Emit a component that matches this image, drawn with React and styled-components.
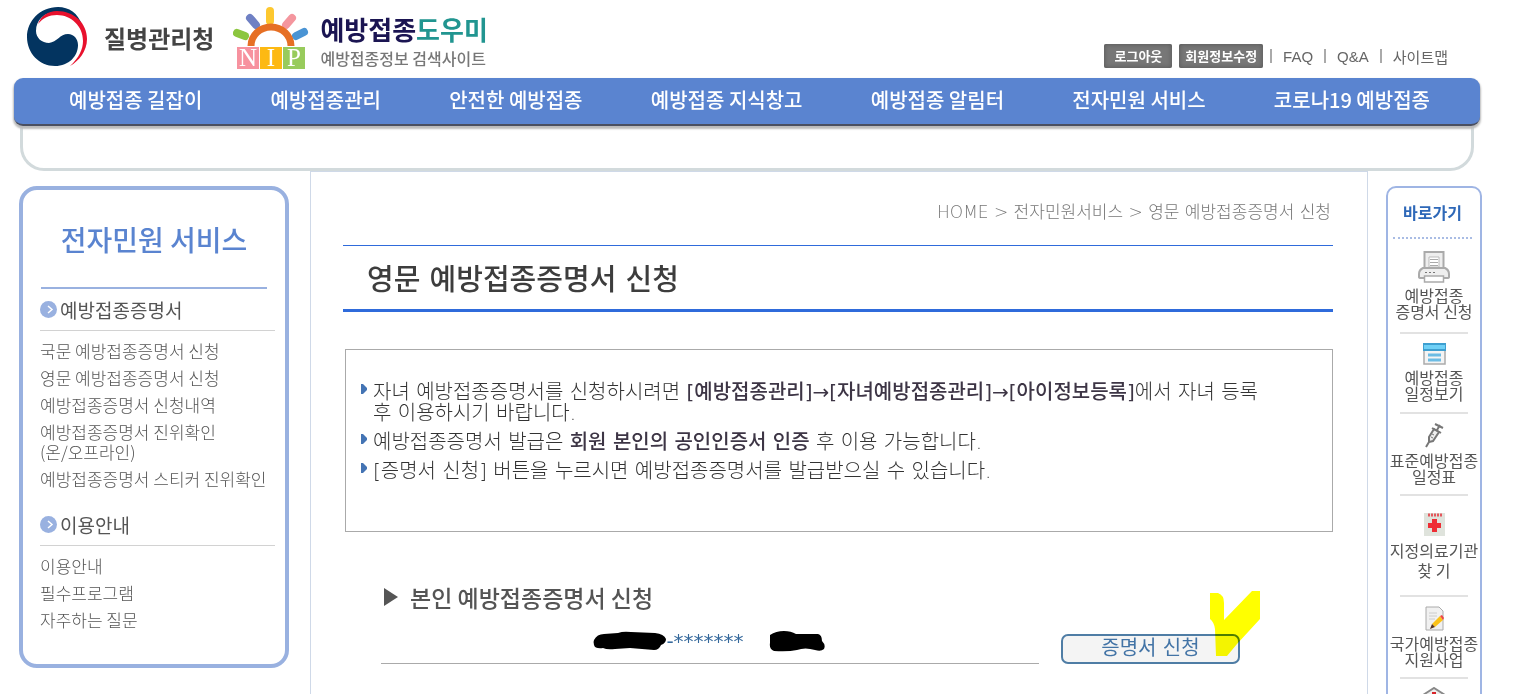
import React from 'react';
import styled, { createGlobalStyle } from 'styled-components';

const GlobalStyle = createGlobalStyle`
  * {
    box-sizing: border-box;
  }
  body {
    margin: 0;
    background: #fff;
    color: #555;
    font-family: 'Noto Sans CJK KR', sans-serif;
    font-weight: 300;
  }
  a {
    color: inherit;
    text-decoration: none;
  }
  ul, h1, h2, h3, p {
    margin: 0;
    padding: 0;
    font-weight: inherit;
  }
  ul {
    list-style: none;
  }
  svg {
    display: block;
  }
`;

const Header = styled.header`
  display: flex;
  justify-content: space-between;
  height: 78px;
  padding: 6px 71px 0 26px;
`;

const Logos = styled.div`
  display: flex;
  align-items: flex-start;
`;

const Agency = styled.a`
  display: flex;
  align-items: center;
  gap: 16px;
  height: 62px;
  margin-right: 19px;
  color: #444;
  font-size: 24px;
  font-weight: 700;
`;

const SiteName = styled.a`
  display: flex;
  gap: 11px;
`;

const SiteTitle = styled.span`
  display: block;
  margin-top: 4px;
  color: #1b1552;
  font-size: 26px;
  line-height: 38px;
  font-weight: 700;
  em {
    color: #219590;
    font-style: normal;
  }
`;

const SiteSub = styled.span`
  display: block;
  color: #777;
  font-size: 16px;
  line-height: 20px;
  font-weight: 500;
`;

const Util = styled.div`
  display: flex;
  align-items: center;
  align-self: flex-end;
  height: 24px;
  margin-bottom: 10px;
  color: #666;
  font-family: 'Liberation Sans', 'Noto Sans CJK KR', sans-serif;
  font-size: 15px;
  font-weight: 400;
`;

const UtilButton = styled.button`
  height: 24px;
  margin-right: 7px;
  padding: 0 ${(props) => props.$pad}px;
  border: 0;
  border-radius: 2px;
  background: #777;
  box-shadow: inset 0 0 5px #555;
  color: #fff;
  font: 700 13px/22px 'Noto Sans CJK KR', sans-serif;
`;

const Bar = styled.span`
  width: 2px;
  height: 14px;
  margin: 0 11px 0 ${(props) => props.$left || 0}px;
  background: #aaa;
`;

const NavArea = styled.div`
  padding: 0 39px 0 14px;
`;

const Nav = styled.nav`
  position: relative;
  height: 48px;
  padding: 0 50px 0 55px;
  border-bottom: 2px solid #4a4f60;
  border-radius: 9px;
  background: #5a84d0;
  box-shadow: 0 2px 2px 1px #bbb;
  ul {
    display: flex;
    justify-content: space-between;
  }
  a {
    color: #fff;
    font-size: 20px;
    line-height: 44px;
    font-weight: 500;
    white-space: nowrap;
  }
`;

const SubNav = styled.div`
  height: 45px;
  margin: 0 6px;
  border: 3px solid #d2dadc;
  border-top: 0;
  border-radius: 0 0 24px 24px;
`;

const Body = styled.div`
  display: grid;
  grid-template-columns: 310px 1fr 151px;
  align-items: start;
`;

const Side = styled.aside`
  min-height: 482px;
  margin: 15px 21px 0 19px;
  padding: 29px 10px 0 17px;
  border: 4px solid #99b1e0;
  border-radius: 18px;
`;

const SideTitle = styled.h2`
  margin: 0 8px 0 1px;
  padding-bottom: 27px;
  border-bottom: 2px solid #99b1e0;
  color: #5a84d0;
  font-size: 28px;
  line-height: 41px;
  font-weight: 500;
  text-align: center;
`;

const SideHead = styled.h3`
  display: flex;
  align-items: center;
  gap: 3px;
  height: 42px;
  margin-bottom: 7px;
  border-bottom: 1px solid #d2d2d2;
  color: #555;
  font-size: 19px;
  font-weight: 400;
`;

const SideList = styled.ul`
  margin-bottom: 11px;
  font-size: 17px;
  line-height: 20px;
  white-space: nowrap;
  li {
    padding: 3px 0 4px;
  }
`;

const Main = styled.main`
  min-height: 620px;
  padding: 27px 34px 0 32px;
  border: 1px solid #cfd9e8;
  border-width: 1px 1px 0;
`;

const Crumbs = styled.div`
  padding-right: 2px;
  color: #777;
  font-family: 'DejaVu Sans', 'Noto Sans CJK KR', sans-serif;
  font-size: 17px;
  line-height: 26px;
  text-align: right;
`;

const PageTitle = styled.h1`
  margin-top: 20px;
  padding: 5px 0 0 24px;
  border-top: 1px solid #2f6bdb;
  border-bottom: 3px solid #2f6bdb;
  color: #3d3d3d;
  font-family: 'DejaVu Sans', 'Noto Sans CJK KR', sans-serif;
  font-size: 29px;
  line-height: 58px;
  font-weight: 500;
`;

const Notice = styled.ul`
  min-height: 183px;
  margin: 37px 0 0 2px;
  padding: 32px 20px 0 15px;
  border: 1px solid #aaa;
  color: #333;
  font-family: 'DejaVu Sans', 'Noto Sans CJK KR', sans-serif;
  font-size: 20px;
  line-height: 21px;
  li {
    display: flex;
    gap: 6px;
    margin-bottom: 8px;
  }
  svg {
    flex: none;
    margin-top: 2px;
  }
  b {
    color: #3d3545;
    font-weight: 500;
  }
`;

const Apply = styled.section`
  padding: 49px 93px 0 38px;
`;

const ApplyTitle = styled.h2`
  display: flex;
  align-items: center;
  gap: 12px;
  padding-left: 3px;
  color: #555;
  font-size: 23px;
  line-height: 32px;
  font-weight: 500;
`;

const ApplyRow = styled.div`
  display: flex;
  align-items: flex-end;
  gap: 22px;
  margin-top: 17px;
`;

const Person = styled.div`
  display: flex;
  flex: 1;
  align-items: center;
  justify-content: center;
  height: 34px;
  padding: 0 2px 11px 0;
  border-bottom: 1px solid #aaa;
  color: #36699c;
  font-family: 'DejaVu Sans', sans-serif;
  font-size: 20px;
  font-weight: 400;
`;

const Masked = styled.span`
  margin-right: 25px;
`;

const ButtonWrap = styled.div`
  position: relative;
`;

const ApplyButton = styled.button`
  display: block;
  width: 179px;
  height: 30px;
  padding: 0 0 2px;
  border: 2px solid #4f7da5;
  border-radius: 7px;
  background: #f4f4f4;
  color: #4374a6;
  font: 400 20px/24px 'DejaVu Sans', 'Noto Sans CJK KR', sans-serif;
`;

const Mark = styled.svg`
  position: absolute;
  top: -43px;
  right: -20px;
  mix-blend-mode: multiply;
  pointer-events: none;
`;

const Quick = styled.aside`
  margin: 15px 37px 0 18px;
  padding-top: 7px;
  border: 2px solid #9fb5e4;
  border-radius: 10px 10px 0 0;
  text-align: center;
`;

const QuickTitle = styled.h2`
  margin: 0 8px 0 5px;
  padding-bottom: 8px;
  border-bottom: 2px dotted #a9bce4;
  color: #2e68b8;
  font-size: 16px;
  line-height: 34px;
  font-weight: 700;
`;

const QuickItem = styled.li`
  display: flex;
  flex-direction: column;
  align-items: center;
  padding-top: ${(props) => props.$top}px;
  color: #555;
  font-size: 16px;
  line-height: ${(props) => props.$line || 16}px;
  font-weight: 400;
  white-space: nowrap;
  &::after {
    content: '';
    width: 68px;
    height: 2px;
    margin-top: ${(props) => props.$bottom}px;
    background: #e2e2e2;
  }
  svg {
    margin-bottom: 4px;
  }
`;

const TaegukLogo = () => (
  <svg width="62" height="62" viewBox="0 0 62 60">
    <path d="M32 0C14 0 1 14 1 30s12 29 28 29c14 0 23-10 23-21 0-6-4-11-10-11-8 0-11 8-19 9-7 0-13-5-13-12C10 13 18 5 31 5c10 0 19 4 25 13C52 6 43 0 32 0z" fill="#033460" />
    <path d="M12 17C15 9 22 4 31 4c17 0 30 12 30 28 0 12-8 22-17 27 9-8 13-17 13-25C57 19 45 8 31 8c-8 0-14 3-19 9z" fill="#e8112d" />
  </svg>
);

const NipLogo = () => (
  <svg width="76" height="63" viewBox="0 0 76 63">
    <g strokeWidth="8" strokeLinecap="round">
      <path d="M17 12l6 7" stroke="#6f80c4" />
      <path d="M37 5v10" stroke="#fdc82f" />
      <path d="M59 12l-6 7" stroke="#f4969e" />
      <path d="M4 27l8 3" stroke="#8cc63f" />
      <path d="M71 26l-8 4" stroke="#4a94d4" />
    </g>
    <path d="M18 40a20 19 0 0 1 40 0" fill="none" stroke="#e66f24" strokeWidth="7" />
    <path d="M4 41h22v22H4z" fill="#f7929f" />
    <path d="M27 41h22v22H27z" fill="#fdb913" />
    <path d="M50 41h22v22H50z" fill="#98cb5c" />
    <g fill="#fff" fontFamily="Liberation Serif, serif" fontWeight="400" fontSize="25" textAnchor="middle">
      <text x="15" y="60">N</text>
      <text x="38" y="60">I</text>
      <text x="61" y="60">P</text>
    </g>
  </svg>
);

const CircleArrow = () => (
  <svg width="17" height="17" viewBox="0 0 17 17">
    <circle cx="8.5" cy="8.5" r="8.5" fill="#99b1e0" />
    <path d="M8 5l4 3.500-4 3.500" fill="none" stroke="#fff" strokeWidth="1.500" />
  </svg>
);

const Bullet = () => (
  <svg width="6" height="10" viewBox="0 0 6 10">
    <path d="M0 0h2l4 4v2L2 10H0z" fill="#4474b4" />
  </svg>
);

const PrinterIcon = () => (
  <svg width="32" height="32" viewBox="0 0 32 32" fill="#eee" stroke="#aaa">
    <path d="M6.500 1h19v18h-19z" strokeWidth="2" />
    <path d="M11 6h10v10H11z" fill="#fff" stroke="#bbb" />
    <path d="M12 8.500h8M12 11.500h8M12 14.500h8" />
    <path d="M5 17h22q4 2 4 6v3q0 1-2 1H3q-2 0-2-1v-3q0-4 4-6z" strokeWidth="2" />
    <path d="M7 21.500h2M11 21.500h2M15 21.500h2" stroke="#777" />
    <path d="M6.500 25h19v6h-19z" fill="#fff" strokeWidth="1.500" />
  </svg>
);

const ScheduleIcon = () => (
  <svg width="23" height="22" viewBox="0 0 23 22">
    <path d="M1 1h21v20H1z" fill="#f4f4f4" stroke="#aaa" strokeWidth="1.500" />
    <path d="M0 0h23v8H0z" fill="#3e9fd0" />
    <path d="M1 2h21v4H1z" fill="#6fd0f6" />
    <path d="M5 12h13M5 17h13" stroke="#6cbce4" strokeWidth="3" />
  </svg>
);

const SyringeIcon = () => (
  <svg width="20" height="25" viewBox="0 0 20 25" fill="none" stroke="#777">
    <path d="M10 6L5 14v5l4-1 6-9z" fill="#eee" strokeWidth="2" />
    <path d="M5 19l-3 5M8 5l9 5M13 7l3-5M11 1l8 4" strokeWidth="2" />
    <path d="M8 11l2 1M7 14l2 1" />
  </svg>
);

const HospitalIcon = () => (
  <svg width="21" height="23" viewBox="0 0 21 23">
    <path d="M0 0h21v23H0z" fill="#dfe3dc" />
    <path d="M4 2h15" stroke="#e4575c" strokeWidth="3" strokeDasharray="2 1" />
    <path d="M8 6h5v4h4v5h-4v4H8v-4H4v-5h4z" fill="#ee2d35" />
  </svg>
);

const NoteIcon = () => (
  <svg width="19" height="25" viewBox="0 0 19 25">
    <path d="M1 1h13l4 4v19H1z" fill="#f1f1f1" stroke="#aaa" />
    <path d="M4 7h8M4 10h8M4 13h6" stroke="#ccc" />
    <path d="M7 18L15 10l3 4-8 7z" fill="#fbc218" />
    <path d="M15 10l2-1 2 3-1 2z" fill="#e44" />
    <path d="M7 18l3 3-5 2z" fill="#553322" />
  </svg>
);

const ClinicIcon = () => (
  <svg width="26" height="24" viewBox="0 0 26 24">
    <path d="M2 8L13 1l11 7v15H2z" fill="#eee" stroke="#888" strokeWidth="2" />
    <path d="M11 5h4v4h4v4h-4v4h-4v-4H7V9h4z" fill="#d8232a" />
  </svg>
);

const menus = [
  '예방접종 길잡이',
  '예방접종관리',
  '안전한 예방접종',
  '예방접종 지식창고',
  '예방접종 알림터',
  '전자민원 서비스',
  '코로나19 예방접종',
];

const sideMenus = [
  {
    title: '예방접종증명서',
    items: [
      ['국문 예방접종증명서 신청'],
      ['영문 예방접종증명서 신청'],
      ['예방접종증명서 신청내역'],
      ['예방접종증명서 진위확인', '(온/오프라인)'],
      ['예방접종증명서 스티커 진위확인'],
    ],
  },
  {
    title: '이용안내',
    items: [['이용안내'], ['필수프로그램'], ['자주하는 질문']],
  },
];

const quickMenus = [
  { icon: <PrinterIcon />, lines: ['예방접종', '증명서 신청'], top: 12, bottom: 13 },
  { icon: <ScheduleIcon />, lines: ['예방접종', '일정보기'], top: 9, bottom: 11 },
  { icon: <SyringeIcon />, lines: ['표준예방접종', '일정표'], top: 9, bottom: 10 },
  { icon: <HospitalIcon />, lines: ['지정의료기관', '찾 기'], top: 17, bottom: 15, line: 20 },
  { icon: <NoteIcon />, lines: ['국가예방접종', '지원사업'], top: 9, bottom: 10 },
  { icon: <ClinicIcon />, lines: ['지정의료기관', '로그인'], top: 8, bottom: 8 },
];

function App() {
  return (
    <>
      <GlobalStyle />
      <Header>
        <Logos>
          <Agency href="#">
            <TaegukLogo />
            질병관리청
          </Agency>
          <SiteName href="#">
            <NipLogo />
            <span>
              <SiteTitle>예방접종<em>도우미</em></SiteTitle>
              <SiteSub>예방접종정보 검색사이트</SiteSub>
            </span>
          </SiteName>
        </Logos>
        <Util>
          <UtilButton $pad={10}>로그아웃</UtilButton>
          <UtilButton $pad={6}>회원정보수정</UtilButton>
          <Bar />
          <a href="#">FAQ</a>
          <Bar $left={11} />
          <a href="#">Q&amp;A</a>
          <Bar $left={11} />
          <a href="#">사이트맵</a>
        </Util>
      </Header>
      <NavArea>
        <Nav>
          <ul>
            {menus.map((menu) => <li key={menu}><a href="#">{menu}</a></li>)}
          </ul>
        </Nav>
        <SubNav />
      </NavArea>
      <Body>
        <Side>
          <SideTitle>전자민원 서비스</SideTitle>
          {sideMenus.map((group) => (
            <div key={group.title}>
              <SideHead><CircleArrow />{group.title}</SideHead>
              <SideList>
                {group.items.map((item) => (
                  <li key={item[0]}>
                    <a href="#">{item[0]}{item[1] && <><br />{item[1]}</>}</a>
                  </li>
                ))}
              </SideList>
            </div>
          ))}
        </Side>
        <Main>
          <Crumbs>HOME &gt; 전자민원서비스 &gt; 영문 예방접종증명서 신청</Crumbs>
          <PageTitle>영문 예방접종증명서 신청</PageTitle>
          <Notice>
            <li>
              <Bullet />
              <p>
                자녀 예방접종증명서를 신청하시려면 <b>[예방접종관리]→[자녀예방접종관리]→[아이정보등록]</b>에서 자녀 등록<br />
                후 이용하시기 바랍니다.
              </p>
            </li>
            <li>
              <Bullet />
              <p>예방접종증명서 발급은 <b>회원 본인의 공인인증서 인증</b> 후 이용 가능합니다.</p>
            </li>
            <li>
              <Bullet />
              <p>[증명서 신청] 버튼을 누르시면 예방접종증명서를 발급받으실 수 있습니다.</p>
            </li>
          </Notice>
          <Apply>
            <ApplyTitle>
              <svg width="14" height="18" viewBox="0 0 14 18"><path d="M0 0l14 9-14 9z" fill="#555" /></svg>
              본인 예방접종증명서 신청
            </ApplyTitle>
            <ApplyRow>
              <Person>
                <svg width="73" height="20" viewBox="0 0 73 20">
                  <path d="M1 9Q4 3 11 3l14-1Q30 0 38 1l24 1q9 1 11 6 0 4-5 6-2 5-7 5L37 17l-15 1q-8 1-12-1-8 1-9-3-1-3 0-5z" />
                </svg>
                <Masked>-*******</Masked>
                <svg width="56" height="21" viewBox="0 0 56 21">
                  <path d="M1 4Q7 0 15 0q7 0 12 3h22q4 1 4 7 4 4 2 8-3 3-9 1-10-3-18 0-9 2-23 1-5-2-4-8z" />
                </svg>
              </Person>
              <ButtonWrap>
                <ApplyButton>증명서 신청</ApplyButton>
                <Mark width="50" height="65" viewBox="0 0 50 65">
                  <path d="M0 2h8q6 2 6 10v17L42 0h8v28L27 53l-10 12H6L5 38Q4 31 0 28z" fill="#ff0" />
                </Mark>
              </ButtonWrap>
            </ApplyRow>
          </Apply>
        </Main>
        <Quick>
          <QuickTitle>바로가기</QuickTitle>
          <ul>
            {quickMenus.map((item, index) => (
              <QuickItem key={index} $top={item.top} $bottom={item.bottom} $line={item.line}>
                {item.icon}
                <a href="#">{item.lines[0]}<br />{item.lines[1]}</a>
              </QuickItem>
            ))}
          </ul>
        </Quick>
      </Body>
    </>
  );
}

export default App;
